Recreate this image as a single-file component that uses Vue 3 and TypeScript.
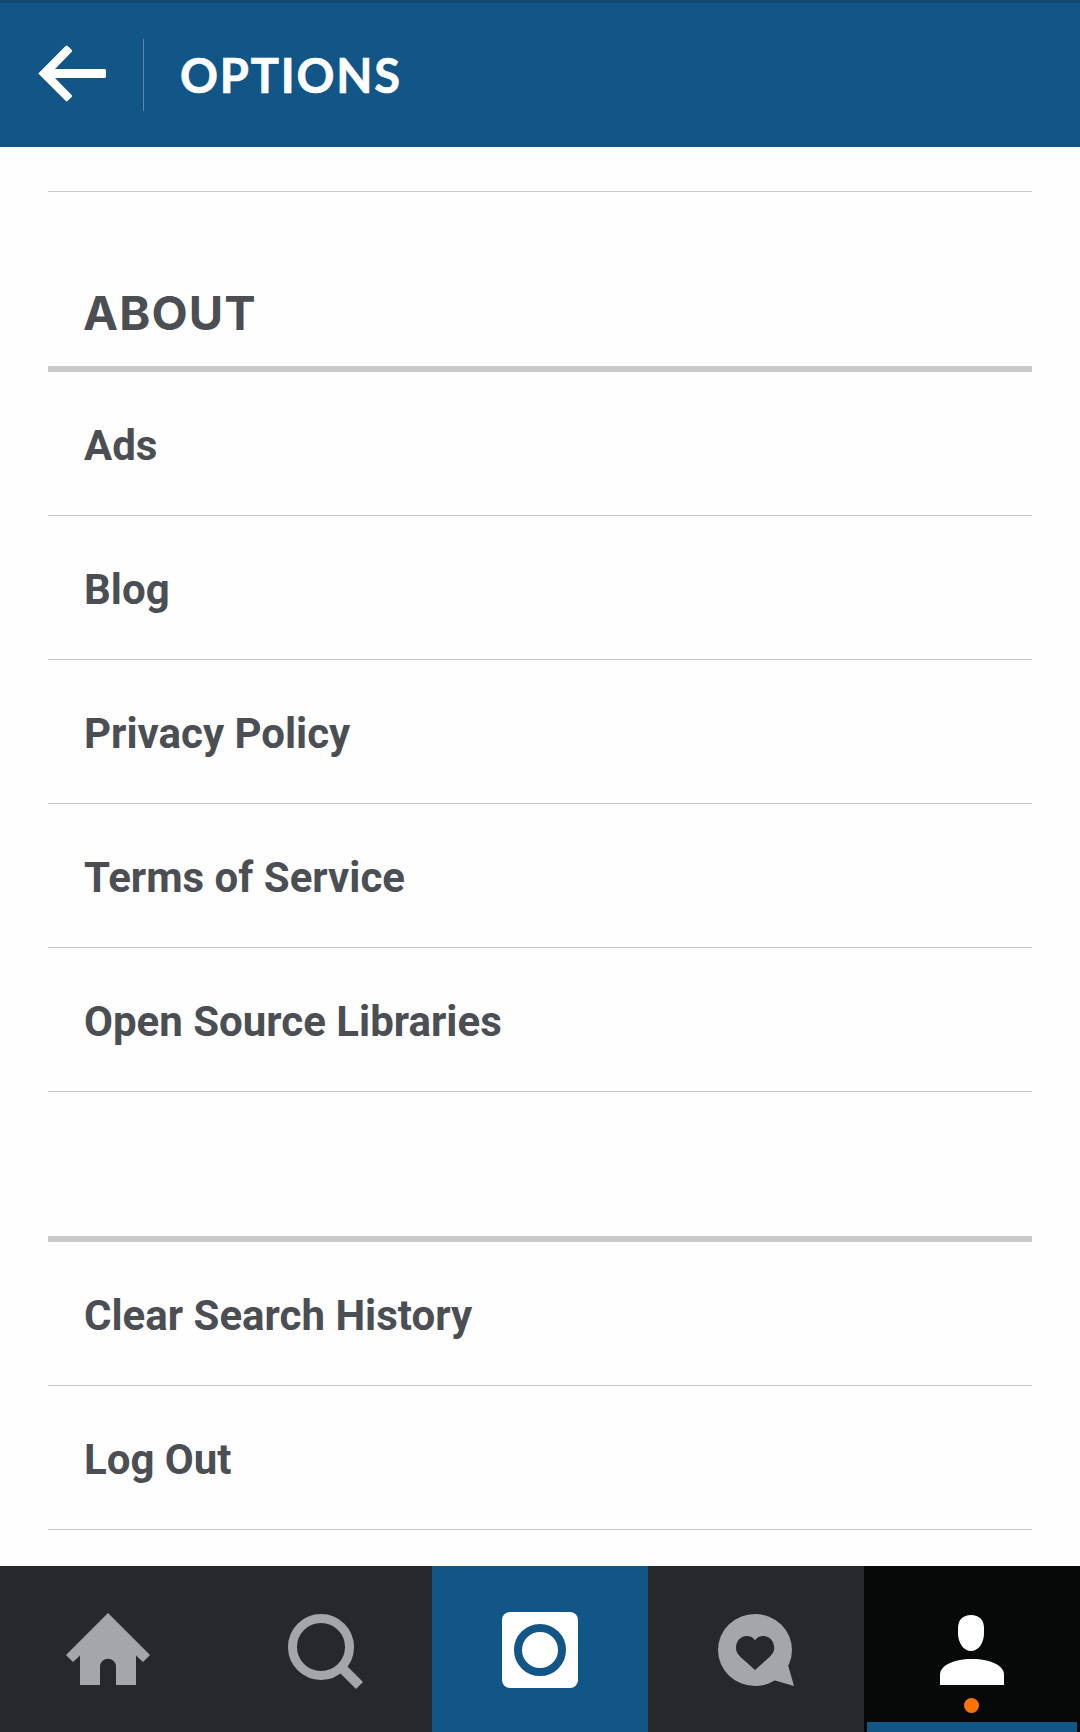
<script setup lang="ts">
const aboutItems: string[] = ['Ads', 'Blog', 'Privacy Policy', 'Terms of Service', 'Open Source Libraries']
const accountItems: string[] = ['Clear Search History', 'Log Out']
</script>

<template>
  <div class="screen">
    <header class="bar">
      <button class="back" aria-label="Back">
        <svg width="143" height="144" viewBox="0 3 143 144">
          <path d="M38.3 73.4 65.6 46 Q66.7 45 67.8 46 L71.6 49.8 Q72.6 50.9 71.6 52 L55 69 H104.6 Q106 69 106 70.4 V76.6 Q106 78 104.6 78 H55 L71.6 94.9 Q72.6 96 71.6 97 L67.8 100.8 Q66.7 101.8 65.6 100.8Z" fill="#fff" />
        </svg>
      </button>
      <span class="divider"></span>
      <h1 class="title">OPTIONS</h1>
    </header>

    <main class="content">
      <div class="previous-end"></div>
      <section>
        <h2 class="heading">ABOUT</h2>
        <ul class="list">
          <li v-for="item in aboutItems" :key="item" class="row">{{ item }}</li>
        </ul>
      </section>
      <section class="account">
        <ul class="list">
          <li v-for="item in accountItems" :key="item" class="row">{{ item }}</li>
        </ul>
      </section>
    </main>

    <nav class="tabs">
      <a class="tab" aria-label="Home">
        <svg viewBox="0 0 216 166">
          <path d="M108 47 150 89 143 96 136 89.5V119H116V100.7A8 8 0 0 0 100 100.7V119H80V89.5L73 96 66 89Z" fill="#a5a6aa" />
        </svg>
      </a>
      <a class="tab" aria-label="Search">
        <svg viewBox="0 0 216 166" fill="none" stroke="#a5a6aa">
          <circle cx="105" cy="81" r="28.5" stroke-width="9" />
          <path d="M125 101 143.5 119.5" stroke-width="9.9" />
        </svg>
      </a>
      <a class="tab camera" aria-label="Camera">
        <svg viewBox="0 0 216 166">
          <rect x="70" y="46" width="76" height="76" rx="8" fill="#fff" />
          <circle cx="108" cy="84" r="22" fill="none" stroke="#125688" stroke-width="8" />
        </svg>
      </a>
      <a class="tab" aria-label="Activity">
        <svg viewBox="0 0 216 166">
          <ellipse cx="107" cy="84" rx="37" ry="36" fill="#a5a6aa" />
          <path d="M140.3 100 146 120 127 114.5 122 105 132 95Z" fill="#a5a6aa" />
          <path d="M107 104 92.5 91C89.5 88 88 85.500 88 82 88 75 92.500 70 98.700 70 102.300 70 105.300 71.600 107 74.200 108.700 71.600 111.700 70 115.300 70 121.600 70 126.200 75 126.200 82 126.200 85.500 124.500 88 121.500 91Z" fill="#27282c" />
        </svg>
      </a>
      <a class="tab active" aria-label="Profile">
        <svg viewBox="0 0 216 166">
          <path d="M107 49C115 49 120 54 120 62V67C120 77 114.500 85 107 85S94 77 94 67V62C94 54 99 49 107 49Z" fill="#fff" />
          <path d="M76 119V108.500C76 100.500 88 93 108 93S140 100.500 140 108.500V119Z" fill="#fff" />
          <circle cx="107.500" cy="139.500" r="7.500" fill="#ff7300" />
          <path d="M3 156H213V166H3Z" fill="#125688" />
        </svg>
      </a>
    </nav>
  </div>
</template>

<style>
body {
  margin: 0;
}
</style>

<style scoped>
.screen {
  display: flex;
  flex-direction: column;
  width: 1080px;
  height: 1732px;
  overflow: hidden;
  background: #fefefe;
  color: #4b4f54;
  font-family: Roboto, sans-serif;
}
.bar {
  display: flex;
  flex: none;
  box-sizing: border-box;
  height: 147px;
  border-top: 3px solid #114870;
  background: #125688;
}
.back {
  width: 143px;
  height: 144px;
  padding: 0;
  border: 0;
  background: none;
}
.back svg {
  display: block;
}
.divider {
  width: 1px;
  height: 72px;
  margin-top: 36px;
  background: #5989ac;
}
.title {
  margin: 0 0 0 36px;
  color: #fff;
  font: 700 47px/144px Lato, sans-serif;
  letter-spacing: 1.8px;
  -webkit-text-stroke: 0.7px #fff;
}
.content {
  flex: 1;
  padding: 0 48px;
}
.previous-end {
  height: 44px;
  border-bottom: 1px solid #c9cacc;
}
.heading {
  box-sizing: border-box;
  height: 174px;
  margin: 0;
  padding: 91px 35px 0;
  font: 700 47px/60px Inter, sans-serif;
  letter-spacing: 1.1px;
}
.list {
  margin: 0;
  padding: 0;
  list-style: none;
  border-top: 6px solid #c9cacc;
}
.row {
  box-sizing: border-box;
  height: 144px;
  padding: 2px 36px 0;
  border-bottom: 1px solid #c9cacc;
  font-size: 42px;
  font-weight: 700;
  line-height: 143px;
}
.account {
  margin-top: 144px;
}
.tabs {
  display: flex;
  flex: none;
  height: 166px;
  background: #27282c;
}
.tab {
  width: 216px;
}
.tab svg {
  display: block;
  width: 216px;
  height: 166px;
}
.camera {
  background: #125688;
}
.active {
  background: #070909;
}
</style>
